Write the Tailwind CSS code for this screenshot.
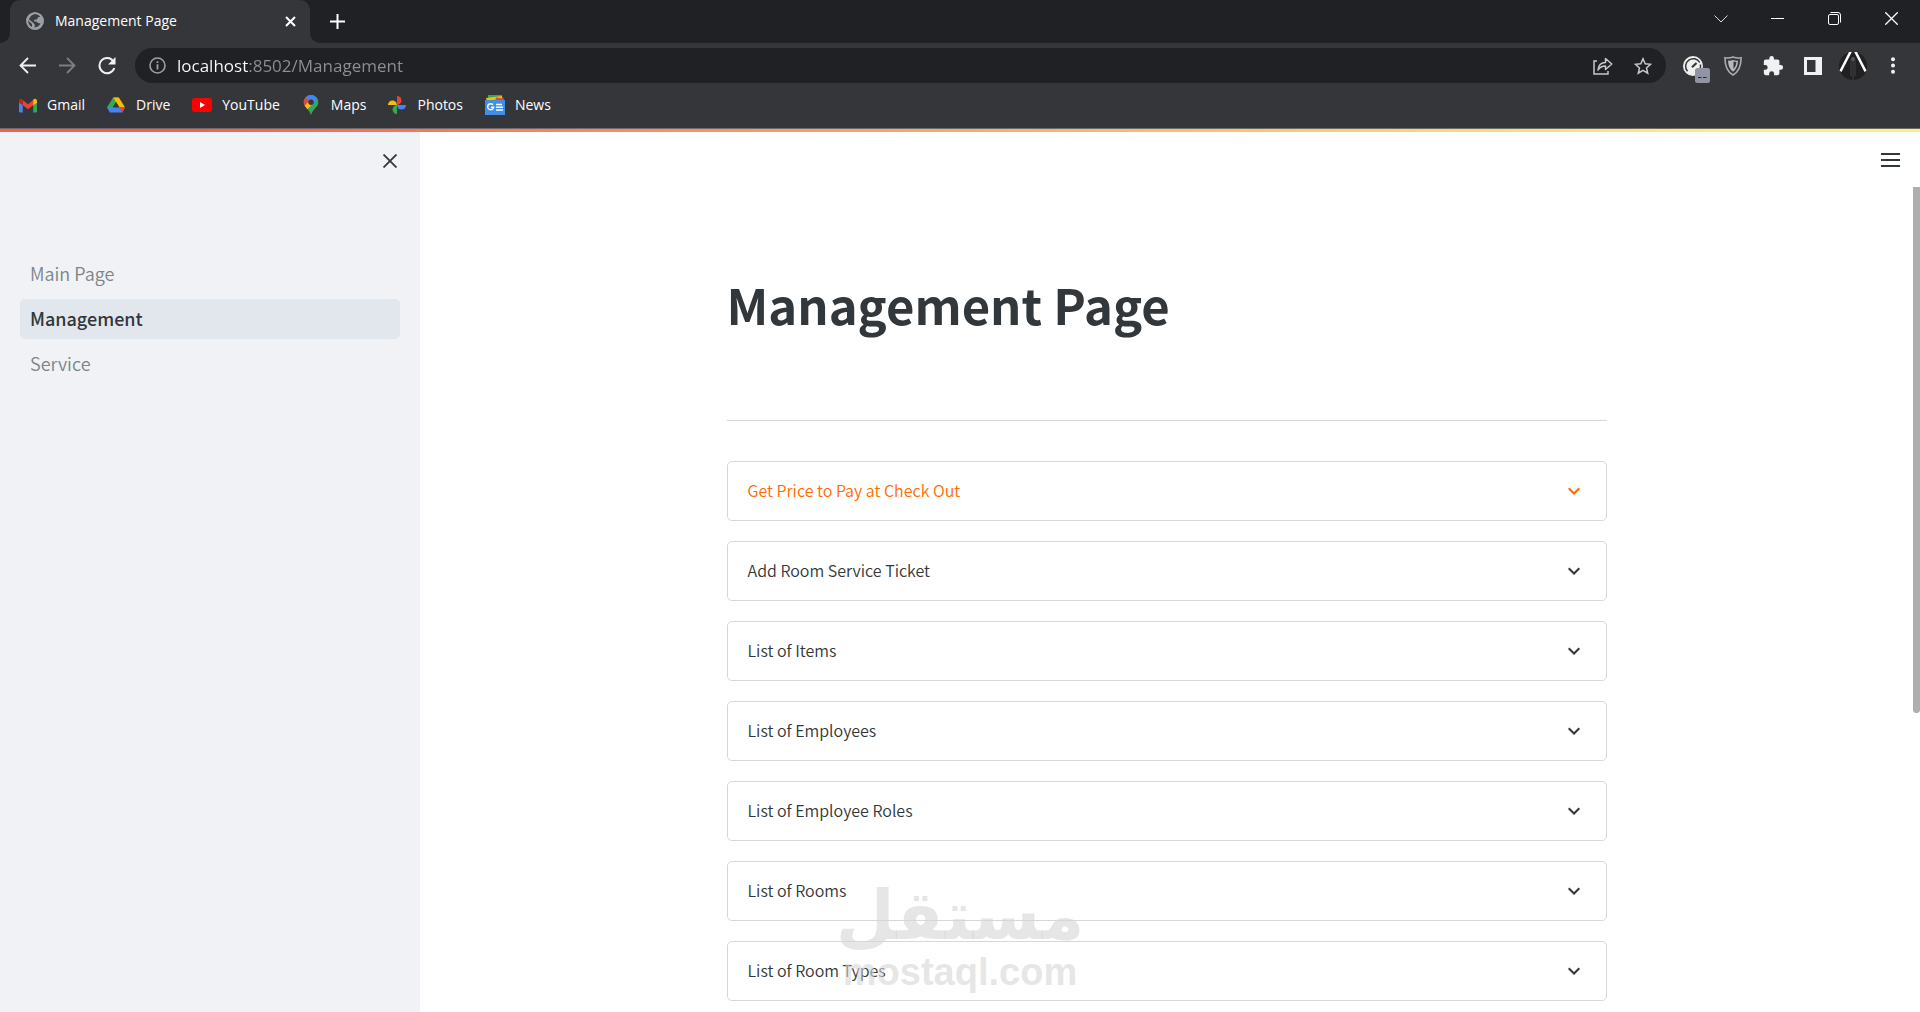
<!DOCTYPE html>
<html lang="en">
<head>
<meta charset="utf-8">
<meta name="viewport" content="width=device-width, initial-scale=1">
<title>Management Page</title>
<script src="https://cdn.jsdelivr.net/npm/@tailwindcss/browser@4"></script>
</head>
<body class="flex h-screen flex-col overflow-hidden bg-white font-['Noto_Sans_CJK_SC',sans-serif] text-[#31373a]">

<!-- Browser window -->
<header class="shrink-0 bg-[#35363a] font-['Open_Sans',sans-serif] text-white">
  <div class="flex h-[43px] items-stretch bg-[#202124]">
    <div class="relative ml-[10px] flex w-[300px] items-center rounded-t-[10px] bg-[#35363a] pr-3 pb-px pl-4">
      <svg class="absolute bottom-0 -left-[10px] size-[10px]" viewBox="0 0 10 10" fill="#35363a"><path d="M10 0v10H0A10 10 0 0 0 10 0z"/></svg>
      <svg class="absolute -right-[10px] bottom-0 size-[10px]" viewBox="0 0 10 10" fill="#35363a"><path d="M0 0v10h10A10 10 0 0 1 0 0z"/></svg>
      <svg class="size-[18px] shrink-0" viewBox="0 0 18 18"><circle cx="9" cy="9" r="8.8" fill="#9aa0a6"/><path fill="#3c3d41" d="M8 2.2c2.3-.6 5 .3 6.500 2.300L12 5.200 11 7.500H8.500L8 9.500h2.500L12 11l2.500.500c-1 2.400-3.500 4-6 3.900L9 13l-2-2.500L3 7.500C3.500 5 5.500 3 8 2.200zM2 8.500l4 3.500v3C3.500 14 2 11.500 2 8.500z"/><circle cx="9" cy="9" r="7.900" fill="none" stroke="#9aa0a6" stroke-width="1.700"/></svg>
      <span class="ml-[11px] text-sm">Management Page</span>
      <button aria-label="Close tab" class="ml-auto flex size-4 items-center justify-center"><svg class="size-[11px]" viewBox="0 0 11 11" stroke="#fff" stroke-width="2"><path d="M1 1l9 9M10 1l-9 9"/></svg></button>
    </div>
    <button aria-label="New tab" class="ml-[19px] flex w-4 items-center justify-center"><svg class="size-[15px] shrink-0" viewBox="0 0 15 15" stroke="#fff" stroke-width="2"><path d="M7.500 0v15M0 7.500h15"/></svg></button>
    <div class="ml-auto flex h-[37px]">
      <button aria-label="Search tabs" class="flex w-[57px] items-center justify-center"><svg class="size-[14px]" viewBox="0 0 14 14" fill="none" stroke="#ddd"><path d="M.500 3.500L7 10l6.500-6.500"/></svg></button>
      <button aria-label="Minimize" class="flex w-[57px] items-center justify-center"><svg class="size-[13px]" viewBox="0 0 13 13" fill="#fff"><path d="M0 6h13v1H0z"/></svg></button>
      <button aria-label="Restore" class="flex w-[57px] items-center justify-center"><svg class="size-[13px]" viewBox="0 0 13 13" fill="none" stroke="#fff"><rect x=".5" y="2.500" width="10" height="10" rx="1.500"/><path d="M2.500 .5H10A2.500 2.500 0 0 1 12.500 3v7.500"/></svg></button>
      <button aria-label="Close window" class="flex w-[57px] items-center justify-center"><svg class="size-[13px]" viewBox="0 0 13 13" stroke="#fff" stroke-width="1.300"><path d="M.3.300l12.400 12.400M12.700.300L.3 12.700"/></svg></button>
    </div>
  </div>

  <div class="flex h-[45px] items-center px-[7px]">
    <button aria-label="Back" class="flex size-10 items-center justify-center"><svg class="size-[17px]" viewBox="0 0 17 17" fill="none" stroke="#f1f1f1" stroke-width="1.800"><path d="M17 8.500H1.500M9 1L1.500 8.500 9 16"/></svg></button>
    <button aria-label="Forward" class="flex size-10 items-center justify-center"><svg class="size-[17px]" viewBox="0 0 17 17" fill="none" stroke="#7d7e80" stroke-width="1.800"><path d="M0 8.500h15.500M8 1l7.500 7.500L8 16"/></svg></button>
    <button aria-label="Reload" class="flex size-10 items-center justify-center"><svg class="size-[18px]" viewBox="0 0 18 18" fill="none"><path d="M15.300 4.200A7.600 7.600 0 1 0 16.300 11" stroke="#f1f1f1" stroke-width="2"/><path d="M17.500 0v7.500H10z" fill="#f1f1f1"/></svg></button>
    <div class="ml-2 flex h-[35px] flex-1 items-center rounded-full bg-[#202124] pr-3 pl-[14px]">
      <svg class="size-[17px] shrink-0" viewBox="0 0 17 17" fill="none" stroke="#9aa0a6"><circle cx="8.500" cy="8.500" r="7.500" stroke-width="1.600"/><path d="M8.500 7.300v5.200M8.500 4.200v1.900" stroke-width="1.800"/></svg>
      <input aria-label="Address" value="localhost:8502/Management" class="ml-[11px] min-w-0 flex-1 bg-linear-to-r from-white from-[71px] to-[#8c9095] to-[71px] bg-clip-text text-[17px] text-transparent outline-none">
      <button aria-label="Share this page" class="flex w-10 items-center justify-center"><svg class="h-[18px] w-5" viewBox="0 0 20 18" fill="none" stroke="#c6c8ca" stroke-width="1.500"><path d="M4 4H1v13h14v-3"/><path d="M5 13c.300-5 3-7.500 7.500-7.600V1.500L18.800 7l-6.300 5.500V9C9 9 6.800 10.200 5 13z" stroke-linejoin="round"/></svg></button>
      <button aria-label="Bookmark this page" class="-mr-[9px] flex w-10 items-center justify-center"><svg class="size-[18px]" viewBox="0 0 18 18" fill="none" stroke="#c6c8ca" stroke-width="1.500"><path d="M9 1.800l2.200 5 5.400.500-4.100 3.600 1.200 5.300L9 13.400l-4.700 2.800 1.200-5.300L1.400 7.300l5.400-.500z"/></svg></button>
    </div>
    <div class="ml-[7px] flex items-center">
      <button aria-label="Speed meter extension" class="relative flex size-10 items-center justify-center">
        <svg class="size-5" viewBox="0 0 20 20"><circle cx="10" cy="10" r="10" fill="#f0f0ee"/><path d="M4.500 15.300A7.600 7.600 0 1 1 16.800 6.500M17.400 8.500q.6 3-.6 5" fill="none" stroke="#35363a" stroke-width="1.500"/><path d="M9 11.200L13.500 7" stroke="#35363a" stroke-width="2.200"/></svg>
        <svg class="absolute top-[22px] left-[22px] size-[15px]" viewBox="0 0 15 15"><rect width="15" height="15" rx="2.500" fill="#9194a3"/><path d="M3 9.500h3.500M8 9.500h3.500" stroke="#26272b" stroke-width="1.200"/></svg>
      </button>
      <button aria-label="Shield extension" class="flex size-10 items-center justify-center"><svg class="h-5 w-[18px]" viewBox="0 0 18 20" fill="none"><path d="M9 1Q13 2.500 17 1.800 17.300 14 9 19 .700 14 1 1.800 5 2.500 9 1z" stroke="#aaacae" stroke-width="1.600"/><path d="M9 4q2.500 1 5 .600Q14 12 9 15.800 4 12 4 4.600 6.500 5 9 4z" fill="#b9b9b9"/><path d="M9.500 5.500q1.500.500 3 .400Q12 10.500 9.500 13z" fill="#35363a"/></svg></button>
      <button aria-label="Extensions" class="flex size-10 items-center justify-center"><svg class="size-[22px]" viewBox="0 0 24 24" fill="#f1f1f1"><path d="M20.500 11H19V7a2 2 0 0 0-2-2h-4V3.500a2.500 2.500 0 0 0-5 0V5H4a2 2 0 0 0-2 2v3.800h1.500a2.700 2.700 0 0 1 0 5.400H2V20a2 2 0 0 0 2 2h3.800v-1.500a2.700 2.700 0 0 1 5.400 0V22H17a2 2 0 0 0 2-2v-4h1.500a2.500 2.500 0 0 0 0-5z"/></svg></button>
      <button aria-label="Side panel" class="flex size-10 items-center justify-center"><svg class="size-[18px]" viewBox="0 0 18 18"><path d="M0 0h18v18H0zM3 3v12h8.500V3z" fill="#f1f1f4" fill-rule="evenodd"/></svg></button>
      <button aria-label="Profile" class="flex size-10 items-center justify-center"><svg class="size-7" viewBox="0 0 28 28"><circle cx="14" cy="14" r="14" fill="#202022"/><path d="M10 0h2.800L2.500 20 .5 18.500zM15.200 0H18l9.500 18.500-2 1.500z" fill="#fff"/><path d="M14 6v22M12 8v16M16 8v16" stroke="#4a4a4c" stroke-width=".8"/><circle cx="14" cy="7" r="2" fill="#555"/></svg></button>
      <button aria-label="Browser menu" class="flex size-10 items-center justify-center"><svg class="h-[17px] w-1" viewBox="0 0 4 17" fill="#f1f1f1"><circle cx="2" cy="2.200" r="2"/><circle cx="2" cy="8.500" r="2"/><circle cx="2" cy="14.800" r="2"/></svg></button>
    </div>
  </div>

  <nav aria-label="Bookmarks" class="flex h-[41px] items-start gap-[22px] border-b border-[#6b6c70] pt-[7px] pl-[19px] text-sm leading-5">
    <a href="#" class="flex items-center gap-[10px]"><svg class="h-[15px] w-[18px]" viewBox="0 0 19 15"><path d="M0 3v10.500A1.500 1.500 0 0 0 1.500 15H4V5z" fill="#4285f4"/><path d="M19 3v10.500a1.500 1.500 0 0 1-1.500 1.500H15V5z" fill="#34a853"/><path d="M4 1.800l5.500 4.400L15 1.800v5.400L9.500 11.500 4 7.200z" fill="#ea4335"/><path d="M0 3C0 .300 2.500-.500 4 1.500V7.300L0 4.500z" fill="#c5221f"/><path d="M19 3c0-2.700-2.500-3.500-4-1.500V7.300l4-2.800z" fill="#fbbc04"/></svg>Gmail</a>
    <a href="#" class="flex items-center gap-[11px]"><svg class="h-4 w-[18px]" viewBox="0 0 19 16"><path d="M6.500 0h6L3.500 15.500 0 10.500z" fill="#34a853"/><path d="M6.500 0h6L19 10.500h-6z" fill="#fbbc04"/><path d="M3.200 10.500H19L16 16H3L0 10.500z" fill="#4285f4"/><path d="M13 10.500h6L16 16z" fill="#ea4335"/><path d="M9.500 5l3.500 5.500H6.200z" fill="#35363a"/></svg>Drive</a>
    <a href="#" class="flex items-center gap-[10px]"><svg class="h-[14px] w-5" viewBox="0 0 20 14"><rect width="20" height="14" rx="3" fill="#f00"/><path d="M8 4l5 3-5 3z" fill="#fff"/></svg>YouTube</a>
    <a href="#" class="flex items-center gap-[11px]"><svg class="h-5 w-[18px]" viewBox="0 0 15 20"><path d="M7.500 0A7.300 7.300 0 0 1 14.800 7.300C14.800 12 9.500 14 7.500 20 5.500 14 .200 12 .200 7.300A7.300 7.300 0 0 1 7.500 0z" fill="#34a853"/><path d="M7.500 0a7.300 7.300 0 0 1 6.400 3.800L8 11 1.800 2.700A7.300 7.300 0 0 1 7.500 0z" fill="#4285f4"/><path d="M1.900 2.600L6 6 1.200 10.800Q-1.100 6 1.900 2.600z" fill="#ea4335"/><path d="M1.200 10.700L5 6.500l4 2.800-5.200 5z" fill="#fbbc04"/><circle cx="7.500" cy="7.200" r="2.700" fill="#35363a"/></svg>Maps</a>
    <a href="#" class="flex items-center gap-[11px]"><svg class="size-[18px]" viewBox="0 0 19 19"><path d="M9.500 0a4.700 4.700 0 0 1 0 9.400z" fill="#ea4335"/><path d="M19 9.500a4.700 4.700 0 0 1-9.400 0z" fill="#4285f4"/><path d="M9.500 19a4.700 4.700 0 0 1 0-9.400z" fill="#34a853"/><path d="M0 9.500a4.700 4.700 0 0 1 9.400 0z" fill="#fbbc04"/></svg>Photos</a>
    <a href="#" class="flex items-center gap-[10px]"><svg class="size-5" viewBox="0 0 20 20"><path d="M3 0h14v5H3z" fill="#34a853"/><path d="M1 3l16-2 1 5H2z" fill="#fbbc04"/><path d="M11 2.500l8 1-.5 3H10z" fill="#ea4335"/><path d="M0 5h20v15H0z" fill="#3f8fe8"/><path d="M8 9.800a3 3 0 1 0 .600 2.500H6M11 9.500h6M11 12.300h7M11 15h7" stroke="#fff" stroke-width="1.500" fill="none"/></svg>News</a>
  </nav>
</header>

<!-- Application -->
<div class="h-[3px] shrink-0 bg-linear-to-r from-[#ff5a4d] from-10% to-[#ffee7a] to-90%"></div>
<div class="flex min-h-0 flex-1">
  <aside class="flex w-[420px] shrink-0 flex-col bg-[#f0f2f6]">
    <div class="flex justify-end pt-[19px] pr-5">
      <button aria-label="Close sidebar" class="flex size-5 items-center justify-center"><svg class="size-[14px]" viewBox="0 0 14 14" stroke="#31373a" stroke-width="1.800"><path d="M.5.500l13 13M13.500.500l-13 13"/></svg></button>
    </div>
    <nav aria-label="Pages" class="mt-[83px] flex flex-col gap-[5px] px-5 text-lg">
      <a href="#" class="flex h-10 items-center rounded-[5px] px-[10px] pb-[2px] font-[350] text-[#7d8488]">Main Page</a>
      <a href="#" aria-current="page" class="flex h-10 items-center rounded-[5px] bg-[#e2e7ee] px-[10px] pb-[2px] font-medium">Management</a>
      <a href="#" class="flex h-10 items-center rounded-[5px] px-[10px] pb-[2px] font-[350] text-[#7d8488]">Service</a>
    </nav>
  </aside>

  <div class="flex min-w-0 flex-1 flex-col">
    <div class="flex h-[55px] shrink-0 items-center justify-end pr-5">
      <button aria-label="Main menu" class="flex h-5 items-center"><svg class="h-[14px] w-[19px]" viewBox="0 0 19 14" fill="#31373a"><path d="M0 0h19v2H0zM0 6h19v2H0zM0 12h19v2H0z"/></svg></button>
    </div>
    <div class="flex min-h-0 flex-1">
      <main class="flex min-w-0 flex-1 justify-center overflow-hidden px-5">
        <div class="w-full max-w-[880px]">
          <h1 class="mt-[81px] text-[49px] leading-[72px] font-bold">Management Page</h1>
          <hr class="mt-20 border-[#d6d7d7]">
          <div class="mt-10 flex flex-col gap-5 text-base font-[350]">
            <button aria-expanded="false" class="flex h-[60px] items-center justify-between rounded-[5px] border border-[#d6d7d7] pr-[26px] pl-5 text-[#ff6a00]"><span class="pb-[2px]">Get Price to Pay at Check Out</span><svg class="h-2 w-3" viewBox="0 0 12 8" fill="none" stroke="currentColor" stroke-width="2"><path d="M.700 1.200L6 6.500l5.300-5.300"/></svg></button>
            <button aria-expanded="false" class="flex h-[60px] items-center justify-between rounded-[5px] border border-[#d6d7d7] pr-[26px] pl-5"><span class="pb-[2px]">Add Room Service Ticket</span><svg class="h-2 w-3" viewBox="0 0 12 8" fill="none" stroke="currentColor" stroke-width="2"><path d="M.700 1.200L6 6.500l5.300-5.300"/></svg></button>
            <button aria-expanded="false" class="flex h-[60px] items-center justify-between rounded-[5px] border border-[#d6d7d7] pr-[26px] pl-5"><span class="pb-[2px]">List of Items</span><svg class="h-2 w-3" viewBox="0 0 12 8" fill="none" stroke="currentColor" stroke-width="2"><path d="M.700 1.200L6 6.500l5.300-5.300"/></svg></button>
            <button aria-expanded="false" class="flex h-[60px] items-center justify-between rounded-[5px] border border-[#d6d7d7] pr-[26px] pl-5"><span class="pb-[2px]">List of Employees</span><svg class="h-2 w-3" viewBox="0 0 12 8" fill="none" stroke="currentColor" stroke-width="2"><path d="M.700 1.200L6 6.500l5.300-5.300"/></svg></button>
            <button aria-expanded="false" class="flex h-[60px] items-center justify-between rounded-[5px] border border-[#d6d7d7] pr-[26px] pl-5"><span class="pb-[2px]">List of Employee Roles</span><svg class="h-2 w-3" viewBox="0 0 12 8" fill="none" stroke="currentColor" stroke-width="2"><path d="M.700 1.200L6 6.500l5.300-5.300"/></svg></button>
            <button aria-expanded="false" class="flex h-[60px] items-center justify-between rounded-[5px] border border-[#d6d7d7] pr-[26px] pl-5"><span class="pb-[2px]">List of Rooms</span><svg class="h-2 w-3" viewBox="0 0 12 8" fill="none" stroke="currentColor" stroke-width="2"><path d="M.700 1.200L6 6.500l5.300-5.300"/></svg></button>
            <button aria-expanded="false" class="flex h-[60px] items-center justify-between rounded-[5px] border border-[#d6d7d7] pr-[26px] pl-5"><span class="pb-[2px]">List of Room Types</span><svg class="h-2 w-3" viewBox="0 0 12 8" fill="none" stroke="currentColor" stroke-width="2"><path d="M.700 1.200L6 6.500l5.300-5.300"/></svg></button>
          </div>
        </div>
      </main>
      <!-- Scroll bar -->
      <div class="w-[7px] shrink-0"><div class="h-[526px] rounded-b-full bg-[#adafae]"></div></div>
    </div>
  </div>
</div>

<!-- Watermark -->
<div class="pointer-events-none absolute bottom-[20px] left-1/2 flex -translate-x-1/2 flex-col items-center text-[#d5d5d5]/60">
  <span lang="ar" dir="rtl" class="font-['DejaVu_Sans',sans-serif] text-[68px] leading-[72px] font-bold">مستقل</span>
  <span class="font-['Liberation_Sans',sans-serif] text-[38px] leading-10 font-bold">mostaql.com</span>
</div>
</body>
</html>
